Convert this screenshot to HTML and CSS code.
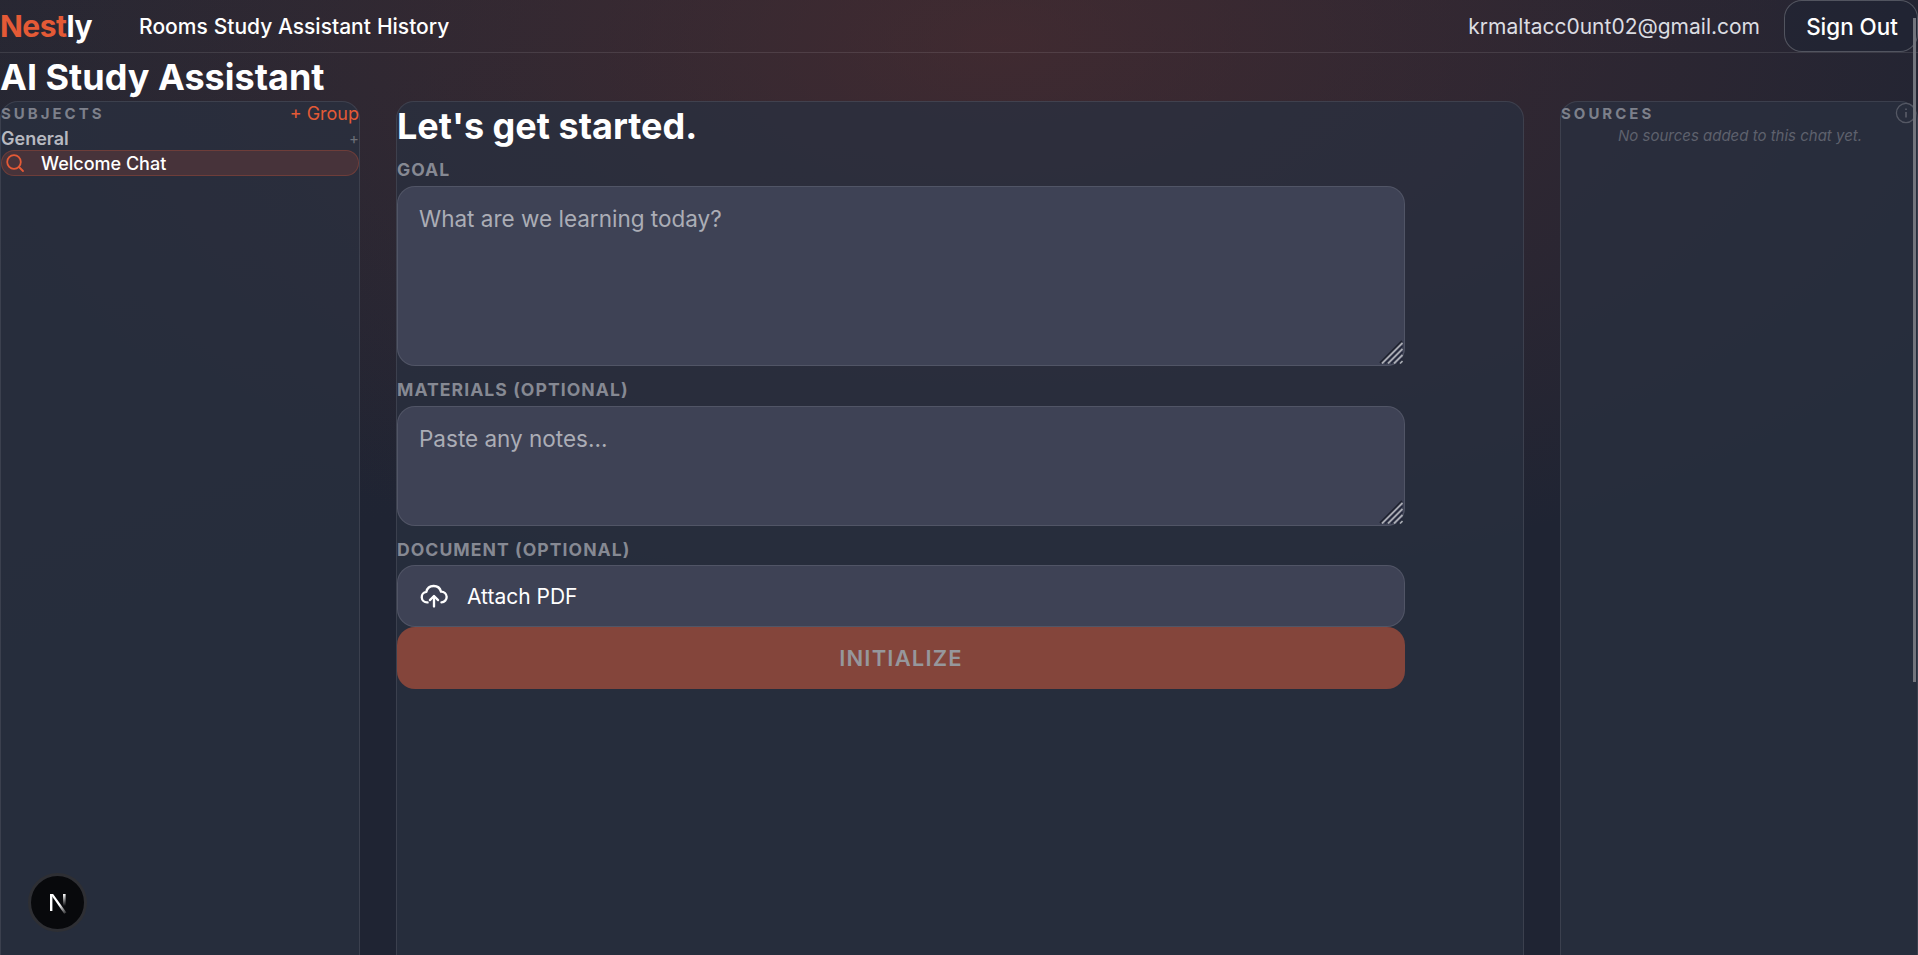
FILE: index.html
```html
<!DOCTYPE html>
<html lang="en">
<head>
  <meta charset="UTF-8" />
  <meta name="viewport" content="width=device-width, initial-scale=1.0"/>
  <title>AI Study Assistant</title>
  <link rel="stylesheet" href="styles.css">
</head>
<body>
  <nav class="navbar">
    <div class="nav-left">
      <a class="logo"><span class="logo-accent">Nest</span>ly</a>
      <div class="nav-links">
        <a>Rooms</a>
        <a>Study Assistant</a>
        <a>History</a>
      </div>
    </div>
    <div class="nav-right">
      <span class="user-email">krmaltacc0unt02@gmail.com</span>
      <button class="sign-out">Sign Out</button>
    </div>
  </nav>

  <h1 class="page-title">AI Study Assistant</h1>

  <main class="columns">
    <aside class="panel subjects">
      <div class="panel-head">
        <span class="panel-label">SUBJECTS</span>
        <a class="add-group">+ Group</a>
      </div>
      <div class="group-row">
        <span class="group-name">General</span>
        <span class="group-add">+</span>
      </div>
      <div class="chat-item">
        <svg class="chat-icon" width="20" height="20" viewBox="0 0 20 20" fill="none" stroke="currentColor" stroke-width="1.8" stroke-linecap="round">
          <circle cx="9" cy="9" r="6.8"/>
          <path d="M14 14l4 4"/>
        </svg>
        <span>Welcome Chat</span>
      </div>
    </aside>

    <section class="panel setup">
      <h2 class="setup-title">Let's get started.</h2>
      <div class="setup-form">
        <label class="field-label" for="goal">GOAL</label>
        <div class="field-wrap">
          <textarea class="field goal-input" id="goal" placeholder="What are we learning today?"></textarea>
          <svg class="grip" width="24" height="24" viewBox="0 0 24 24" fill="none">
            <path d="M1 23L23 1" stroke="#1f2230" stroke-width="1.8"/>
            <path d="M3 23.5L23.5 3M9 23.5L23.5 9M15 23.5L23.5 15" stroke="#a9abb3" stroke-width="1.8"/>
            <path d="M6 23.5L23.5 6M12 23.5L23.5 12M18 23.5L23.5 18" stroke="#23263a" stroke-width="1.4"/>
            <path d="M21 23.5L23.5 21" stroke="#a9abb3" stroke-width="1.6"/>
          </svg>
        </div>

        <label class="field-label spaced-label" for="materials">MATERIALS (OPTIONAL)</label>
        <div class="field-wrap">
          <textarea class="field materials-input" id="materials" placeholder="Paste any notes..."></textarea>
          <svg class="grip" width="24" height="24" viewBox="0 0 24 24" fill="none">
            <path d="M1 23L23 1" stroke="#1f2230" stroke-width="1.8"/>
            <path d="M3 23.5L23.5 3M9 23.5L23.5 9M15 23.5L23.5 15" stroke="#a9abb3" stroke-width="1.8"/>
            <path d="M6 23.5L23.5 6M12 23.5L23.5 12M18 23.5L23.5 18" stroke="#23263a" stroke-width="1.4"/>
            <path d="M21 23.5L23.5 21" stroke="#a9abb3" stroke-width="1.6"/>
          </svg>
        </div>

        <label class="field-label spaced-label doc-label">DOCUMENT (OPTIONAL)</label>
        <div class="attach">
          <svg width="28" height="28" viewBox="0 0 24 24" fill="none" stroke="currentColor" stroke-width="2" stroke-linecap="round" stroke-linejoin="round">
            <path d="M6.5 17.5H6a4.5 4.5 0 0 1-.6-8.96A6.5 6.5 0 0 1 18 8.2a4.6 4.6 0 0 1 .4 9.3"/>
            <path d="M12 21v-8.5"/>
            <path d="M8.5 15.5L12 12l3.5 3.5"/>
          </svg>
          <span>Attach PDF</span>
        </div>
        <button class="initialize">INITIALIZE</button>
      </div>
    </section>

    <aside class="panel sources">
      <div class="panel-head sources-head">
        <span class="panel-label">SOURCES</span>
        <svg class="info-icon" width="22" height="22" viewBox="0 0 22 22" fill="none" stroke="currentColor">
          <circle cx="11" cy="11" r="9.6" stroke-width="1.3"/>
          <path d="M11 10v5.5M11 6.5v1.4" stroke-width="1.8"/>
        </svg>
      </div>
      <p class="empty-note">No sources added to this chat yet.</p>
    </aside>
  </main>

  <div class="next-badge">
    <svg width="24" height="24" viewBox="0 0 24 24" fill="none">
      <defs>
        <linearGradient id="fade-a" x1="0" y1="0" x2="1" y2="1">
          <stop offset="0.55" stop-color="#fff"/>
          <stop offset="1" stop-color="#fff" stop-opacity="0.1"/>
        </linearGradient>
        <linearGradient id="fade-b" x1="0" y1="0" x2="0" y2="1">
          <stop offset="0" stop-color="#fff"/>
          <stop offset="1" stop-color="#fff" stop-opacity="0"/>
        </linearGradient>
      </defs>
      <rect x="4" y="3" width="2.4" height="17" fill="#fff"/>
      <path d="M4.5 3h2.6L20.4 21.5l-2.2 1.2z" fill="url(#fade-a)"/>
      <rect x="17" y="3" width="2.6" height="12" fill="url(#fade-b)"/>
    </svg>
  </div>
  <div class="scroll-thumb"></div>
</body>
</html>
```

FILE: styles.css
```css
* {
  box-sizing: border-box;
}

html,
body {
  height: 100%;
}

body {
  margin: 0;
  overflow: hidden;
  font-family: Inter, sans-serif;
  color: #fff;
  background:
    radial-gradient(ellipse 1100px 560px at 1000px 40px, rgba(110, 50, 45, 0.4), rgba(110, 50, 45, 0) 100%),
    linear-gradient(160deg, #252733 0%, #20253400 40%),
    #1f2433;
}

.navbar {
  height: 53px;
  display: flex;
  justify-content: space-between;
  align-items: center;
  border-bottom: 1px solid rgba(255, 255, 255, 0.1);
}

.nav-left {
  display: flex;
  align-items: center;
}

.logo {
  font-size: 30px;
  font-weight: 700;
  letter-spacing: -0.5px;
}

.logo-accent {
  color: #e45a36;
}

.nav-links {
  display: flex;
  gap: 6px;
  margin-left: 47px;
  font-size: 21px;
  font-weight: 500;
}

.nav-right {
  display: flex;
  align-items: center;
  gap: 24px;
  align-self: flex-start;
}

.user-email {
  font-size: 21px;
  color: #dcdde2;
}

.sign-out {
  width: 134px;
  height: 52px;
  padding-left: 8px;
  border: 1px solid rgba(255, 255, 255, 0.22);
  border-radius: 18px;
  background: rgba(31, 36, 51, 0.6);
  color: #fff;
  font: 500 22.4px Inter, sans-serif;
}

.page-title {
  margin: 0;
  height: 48px;
  font-size: 36px;
  line-height: 48px;
  font-weight: 700;
}

.columns {
  display: grid;
  grid-template-columns: 360px 1128px 358px;
  column-gap: 36px;
  height: 854px;
}

.panel {
  border: 1px solid rgba(255, 255, 255, 0.09);
  border-bottom: none;
  border-radius: 18px 18px 0 0;
  background: rgba(42, 48, 64, 0.75);
}

.panel-head {
  display: flex;
  justify-content: space-between;
  align-items: center;
  height: 23px;
  margin-bottom: 2px;
}

.sources-head {
  height: 22px;
}

.panel-label {
  font-size: 15px;
  font-weight: 700;
  letter-spacing: 3px;
  color: #7d808b;
}

.add-group {
  font-size: 18px;
  color: #e45a36;
}

.group-row {
  display: flex;
  justify-content: space-between;
  align-items: center;
  height: 23px;
  margin-top: 1px;
}

.group-name {
  font-size: 18px;
  font-weight: 600;
  color: #b7b9c0;
}

.group-add {
  font-size: 15px;
  color: #6d7079;
}

.chat-item {
  display: flex;
  align-items: center;
  gap: 16px;
  height: 26px;
  padding-left: 3px;
  border: 1px solid rgba(228, 90, 54, 0.25);
  border-radius: 13px;
  background: #47333a;
  font-size: 18px;
  font-weight: 500;
}

.chat-icon {
  color: #e45a36;
}

.setup-title {
  margin: 0;
  height: 48px;
  font-size: 36px;
  line-height: 48px;
  font-weight: 700;
}

.setup-form {
  width: 1008px;
  display: flex;
  flex-direction: column;
}

.field-label {
  height: 36px;
  padding-top: 10px;
  font-size: 17.6px;
  line-height: 20px;
  font-weight: 700;
  letter-spacing: 1.05px;
  color: #868993;
}

.spaced-label {
  height: 40px;
  padding-top: 14px;
}

.doc-label {
  height: 39px;
}

.field-wrap {
  position: relative;
}

.field {
  display: block;
  width: 100%;
  padding: 18px 21px;
  border: 1px solid rgba(255, 255, 255, 0.1);
  border-radius: 18px;
  background: #3e4255;
  color: #fff;
  font: 400 22.5px/28px Inter, sans-serif;
  outline: none;
  resize: none;
}

.field::placeholder {
  color: #abadb6;
}

.goal-input {
  height: 180px;
}

.materials-input {
  height: 120px;
}

.grip {
  position: absolute;
  right: 2px;
  bottom: 2px;
}

.attach {
  display: flex;
  align-items: center;
  gap: 19px;
  height: 62px;
  padding-left: 22px;
  border: 1px solid rgba(255, 255, 255, 0.1);
  border-radius: 18px;
  background: #3e4255;
  font-size: 21px;
}

.initialize {
  height: 62px;
  border: none;
  border-radius: 18px;
  background: #84453b;
  color: #96979c;
  font: 600 22px Inter, sans-serif;
  letter-spacing: 1.2px;
}

.empty-note {
  margin: 0;
  padding-left: 2px;
  text-align: center;
  font-size: 15px;
  font-style: italic;
  color: #5e616d;
}

.info-icon {
  color: #555864;
}

.next-badge {
  position: absolute;
  left: 28px;
  top: 873px;
  width: 59px;
  height: 59px;
  display: flex;
  justify-content: center;
  align-items: center;
  border: 3px solid #2e2f34;
  border-radius: 50%;
  background: #08090c;
}

.scroll-thumb {
  position: absolute;
  right: 2px;
  top: 18px;
  width: 3px;
  height: 664px;
  background: #73757d;
}
```
